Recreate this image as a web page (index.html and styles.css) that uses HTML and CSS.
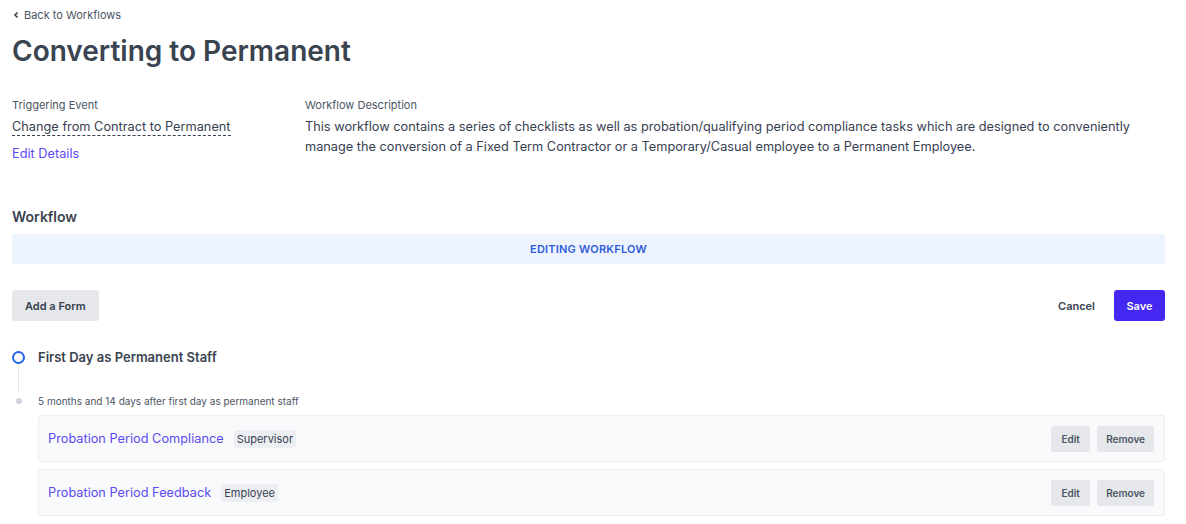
FILE: index.html
```html
<!DOCTYPE html>
<html>
<head>
<meta charset="utf-8">
<link rel="stylesheet" href="styles.css">
</head>
<body>
<div class="page">
  <a class="back" href="#"><svg width="8" height="8" viewBox="0 0 8 8"><path d="M5.5 1.5 L3 4 L5.5 6.5" fill="none" stroke="#374151" stroke-width="1.6"/></svg>Back to Workflows</a>
  <h1 class="title">Converting to Permanent</h1>

  <div class="meta">
    <div class="meta-left">
      <div class="label">Triggering Event</div>
      <div class="event"><span class="dashed">Change from Contract to Permanent</span></div>
      <a class="edit-details" href="#">Edit Details</a>
    </div>
    <div class="meta-right">
      <div class="label">Workflow Description</div>
      <p class="desc">This workflow contains a series of checklists as well as probation/qualifying period compliance tasks which are designed to conveniently manage the conversion of a Fixed Term Contractor or a Temporary/Casual employee to a Permanent Employee.</p>
    </div>
  </div>

  <h2 class="section">Workflow</h2>
  <div class="banner">EDITING WORKFLOW</div>

  <div class="toolbar">
    <button class="btn btn-gray">Add a Form</button>
    <div class="actions">
      <button class="btn btn-link">Cancel</button>
      <button class="btn btn-primary">Save</button>
    </div>
  </div>

  <div class="timeline">
    <div class="step">
      <div class="rail">
        <span class="ring"></span>
        <span class="line"></span>
      </div>
      <div class="step-title">First Day as Permanent Staff</div>
    </div>
    <div class="sub">
      <div class="rail"><span class="dot"></span></div>
      <div class="sub-text">5 months and 14 days after first day as permanent staff</div>
    </div>
    <div class="cards">
      <div class="card">
        <div class="card-main"><a class="card-title" href="#">Probation Period Compliance</a><span class="tag">Supervisor</span></div>
        <div class="card-actions"><button class="btn btn-small btn-edit">Edit</button><button class="btn btn-small">Remove</button></div>
      </div>
      <div class="card">
        <div class="card-main"><a class="card-title" href="#">Probation Period Feedback</a><span class="tag">Employee</span></div>
        <div class="card-actions"><button class="btn btn-small btn-edit">Edit</button><button class="btn btn-small">Remove</button></div>
      </div>
    </div>
  </div>
</div>
</body>
</html>
```

FILE: styles.css
```css
* { box-sizing: border-box; }
body {
  margin: 0;
  font-family: Inter, "Noto Sans", sans-serif;
  color: #374151;
  background: #fff;
}
.page {
  padding: 3px 21px 0 12px;
}
.back {
  display: inline-flex;
  align-items: center;
  gap: 4px;
  font-size: 11px;
  color: #4b5563;
  text-decoration: none;
  line-height: 18px;
}
.title {
  margin: 9px 0 0;
  font-size: 28px;
  font-weight: 600;
  line-height: 36px;
  color: #3a4350;
}
.meta {
  display: flex;
  margin-top: 28px;
}
.meta-left { width: 293px; flex-shrink: 0; }
.meta-right { flex: 1; }
.label {
  font-size: 11px;
  color: #4b5563;
  line-height: 16px;
}
.event {
  margin-top: 5px;
  font-size: 12.75px;
  line-height: 18px;
}
.dashed {
  border-bottom: 1px dashed #374151;
  padding-bottom: 1px;
  color: #374151;
}
.edit-details {
  display: block;
  margin-top: 9px;
  font-size: 12.75px;
  line-height: 18px;
  color: #5b4bf0;
  text-decoration: none;
}
.desc {
  margin: 4px 0 0;
  font-size: 12.75px;
  line-height: 20px;
  color: #374151;
}
.section {
  margin: 44px 0 0;
  font-size: 14px;
  font-weight: 600;
  line-height: 20px;
  color: #3a4350;
}
.banner {
  margin-top: 7px;
  height: 30px;
  background: #eef4ff;
  border-radius: 3px;
  display: flex;
  align-items: center;
  justify-content: center;
  font-size: 11px;
  font-weight: 600;
  color: #2e5bd9;
  letter-spacing: 0.2px;
}
.toolbar {
  margin-top: 26px;
  display: flex;
  justify-content: space-between;
  align-items: center;
}
.actions { display: flex; align-items: center; gap: 9px; }
.btn {
  font-family: inherit;
  border: none;
  cursor: pointer;
  font-weight: 600;
  font-size: 11px;
  border-radius: 3px;
}
.btn-gray {
  height: 31px;
  padding: 0 13px;
  background: #e5e7eb;
  color: #374151;
}
.btn-link {
  background: none;
  color: #374151;
  padding: 0 10px;
  height: 31px;
}
.btn-primary {
  height: 31px;
  width: 51px;
  background: #4527f2;
  color: #fff;
}
.timeline { margin-top: 27px; }
.step, .sub { display: flex; }
.rail {
  width: 26px;
  flex-shrink: 0;
  display: flex;
  flex-direction: column;
  align-items: flex-start;
}
.ring {
  width: 13px;
  height: 13px;
  border: 2px solid #2563eb;
  border-radius: 50%;
  margin-top: 3px;
}
.line {
  width: 1px;
  flex: 1;
  margin-left: 6px;
  background: #e5e7eb;
  min-height: 30px;
}
.step-title {
  font-size: 13px;
  font-weight: 600;
  line-height: 19px;
  color: #3a4350;
}
.sub .rail { padding-top: 4px; }
.dot {
  width: 6px;
  height: 6px;
  margin-left: 3.5px;
  background: #d1d5db;
  border-radius: 50%;
}
.sub-text {
  font-size: 10px;
  line-height: 14px;
  color: #4b5563;
}
.cards {
  margin-left: 26px;
  margin-top: 7px;
  display: flex;
  flex-direction: column;
  gap: 7px;
}
.card {
  height: 47px;
  background: #f9fafb;
  border: 1px solid #eceef1;
  border-radius: 3px;
  display: flex;
  align-items: center;
  justify-content: space-between;
  padding: 0 10px 0 9px;
}
.card-main { display: flex; align-items: center; gap: 10px; }
.card-title {
  font-size: 12.75px;
  color: #5b4bf0;
  text-decoration: none;
}
.tag {
  font-size: 11px;
  background: #eceef1;
  color: #374151;
  padding: 2px 3px;
  border-radius: 3px;
  line-height: 14px;
}
.card-actions { display: flex; gap: 7px; }
.btn-small {
  height: 26px;
  padding: 0 9px;
  background: #e5e7eb;
  color: #4b5563;
  font-size: 10px;
}
.btn-edit { min-width: 39px; }
```
